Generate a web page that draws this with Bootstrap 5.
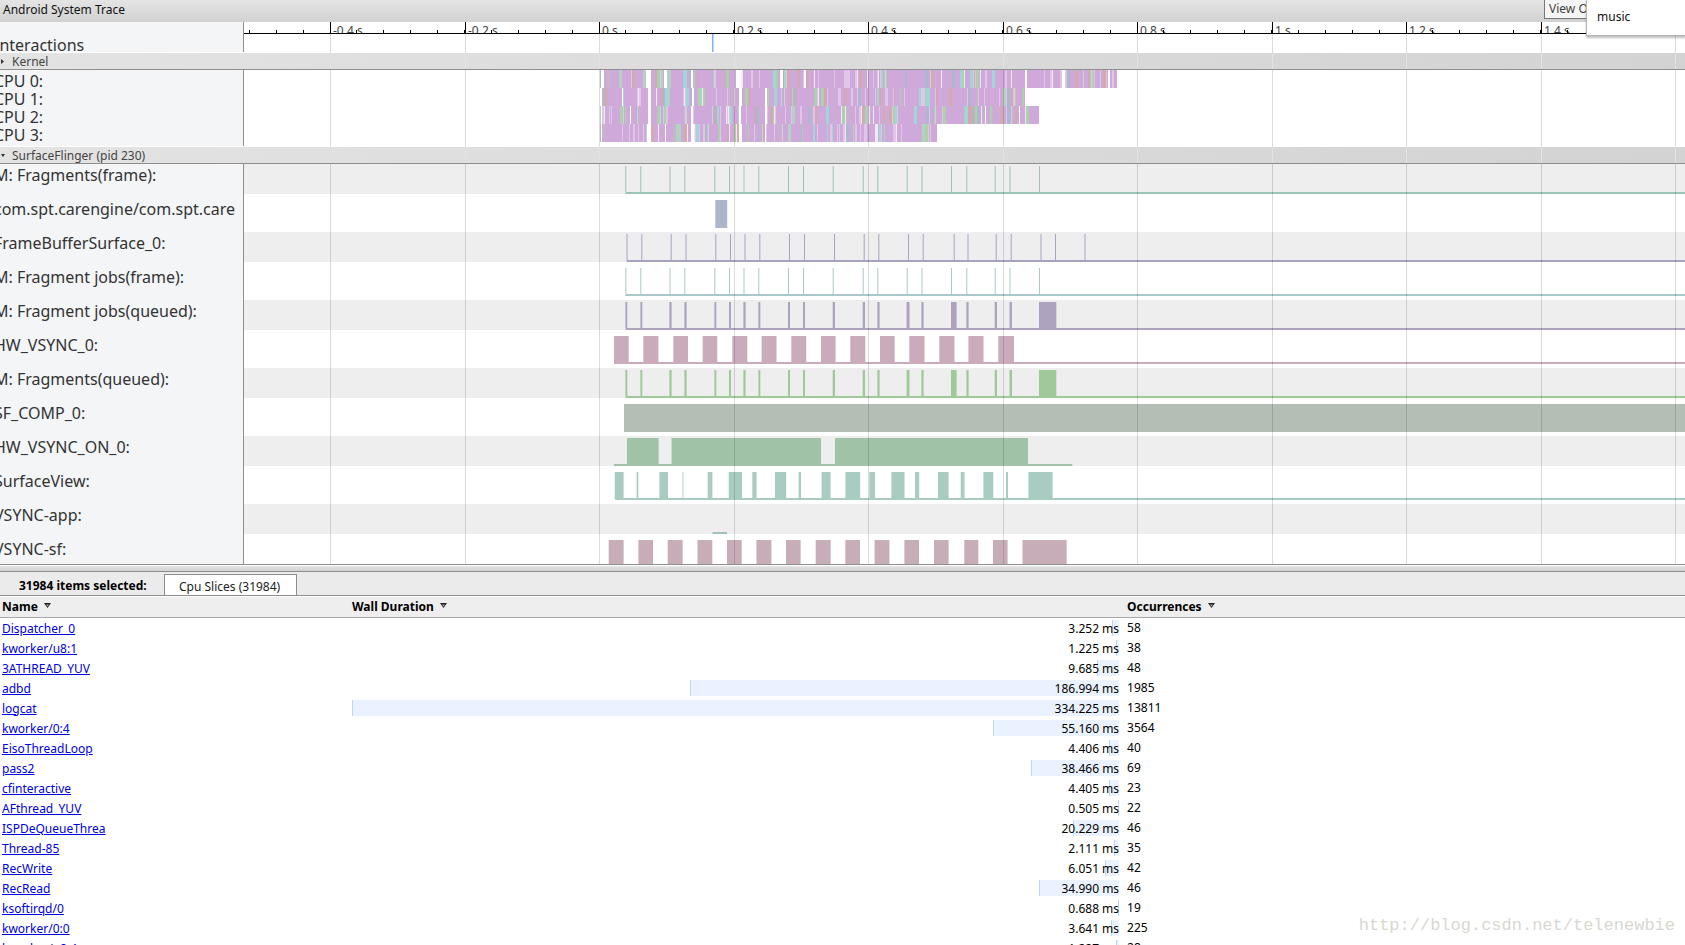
<!DOCTYPE html>
<html lang="en">
<head>
<meta charset="utf-8">
<meta name="viewport" content="width=device-width, initial-scale=1">
<title>Android System Trace</title>
<link href="https://cdn.jsdelivr.net/npm/bootstrap@5.3.0/dist/css/bootstrap.min.css" rel="stylesheet">
<style>
  body { font: 12px/16px "Noto Sans", "Open Sans", sans-serif; color: #000; background: #fff; height: 100vh; overflow: hidden; }
  .title-bar { height: 22px; line-height: 19px; background: linear-gradient(#e5e5e5, #d1d1d1); padding-left: 3px; color: #111; }
  .view-btn { font-size: 12px; line-height: 16px; height: 19px; width: 141px; border: 1px solid #777; border-top: 0; border-radius: 0; background: #f5f5f5; color: #444; padding: 1px 4px; text-align: left; }
  .suggest { top: 0; right: 0; width: 99px; height: 36px; background: #fff; border: 1px solid #b4b4b4; border-top: 0; border-right: 0; box-shadow: 0 2px 2px rgba(0,0,0,.25); padding: 9px 10px; z-index: 5; color: #111; }
  .trace-view { border-bottom: 1px solid #8e8e8e; }
  .trace-label { width: 244px; flex: none; background: #f3f5f7; border-right: 1px solid #8e8e8e; font-size: 16px; line-height: 22px; color: #333; white-space: nowrap; text-indent: -6px; }
  .trace-canvas { flex: 1 1 0; min-width: 0; overflow: hidden; }
  .trace-canvas svg, .group-head .grid-svg { display: block; width: 100%; height: 100%; }
  .ruler-row { height: 12px; }
  .slim-row { height: 18px; }
  .ruler-row text { font-size: 12px; fill: #444; }
  .counter-row .trace-label { height: 34px; line-height: 23px; }
  .counter-row .trace-canvas { height: 30px; }
  .counter-row:nth-child(odd) .trace-canvas { background: #eee; }
  .counter-row:last-child .trace-label, .counter-row:last-child .trace-canvas { height: 26px; }
  .group-head { height: 17px; margin-top: 1px; line-height: 16px; padding-top: 1px; color: #444; background: linear-gradient(90deg, #e3e3e3, #d3d3d3); border-bottom: 1px solid #8e8e8e; z-index: 2; }
  .group-head svg.caret { width: 4px; height: 5px; margin: 0 7px 0 1px; fill: #333; }
  .over-grid { top: 0; right: 0; bottom: 0; left: 244px; overflow: hidden; pointer-events: none; z-index: 1; }
  .kernel-tracks { margin-bottom: 5px; }
  .kernel-tracks .last-cpu .trace-label { height: 22px; }
  .drag-bar { height: 6px; margin-top: 1px; background: linear-gradient(#e5e5e5, #d1d1d1); border-bottom: 1px solid #8e8e8e; }
  .tab-strip { height: 24px; background: #ebebeb; border-bottom: 1px solid #8e8e8e; padding: 2px 0 0 19px; }
  .tab-strip .nav-link { font-size: 12px; line-height: 16px; padding: 4px 16px 1px 14px; height: 21px; border: 1px solid #8e8e8e; border-bottom: 0; border-radius: 0; background: #fff; color: #222; }
  .tab-title { width: 145px; line-height: 22px; padding-top: 1px; }
  .slices { width: 100%; table-layout: fixed; margin-top: 1px; border-collapse: collapse; }
  .slices th { height: 20px; line-height: 16px; background: #eee; border-bottom: 1px solid #aaa; padding: 2px 2px 1px; }
  .slices td { height: 20px; padding: 2px 6px 2px 2px; }
  .slices a { color: #0000e0; text-decoration: underline; display: block; line-height: 16px; padding-top: 1px; height: 16px; }
  .slices th svg { width: 7px; height: 5px; margin: 0 0 4px 3px; }
  .dur { height: 16px; line-height: 18px; text-align: right; z-index: 0; }
  .dur i { position: absolute; right: 0; top: 0; height: 16px; background: #eaf2ff; border-left: 1px solid #bdd7f8; z-index: -1; }
  .slices td:last-child { line-height: 18px; padding: 1px 2px; }
  .site-mark { right: 10px; bottom: 9px; font: 17px/20px "Liberation Mono", monospace; color: #d8d8d1; }
</style>
</head>
<body class="d-flex flex-column position-relative">
<header class="title-bar d-flex flex-shrink-0">
  <span>Android System Trace</span>
  <button class="btn view-btn ms-auto" type="button">View Options</button>
</header>
<div class="suggest position-absolute">music</div>

<main class="trace-view position-relative flex-shrink-0 overflow-hidden">
  <div class="d-flex ruler-row"><div class="trace-label"></div><div class="trace-canvas"><svg id="ruler"></svg></div></div>
  <div class="d-flex slim-row"><div class="trace-label">Interactions</div><div class="trace-canvas"><svg id="interactions"></svg></div></div>

  <div class="group-head position-relative d-flex align-items-center"><svg class="caret" viewBox="0 0 4 5"><path d="M0 0v5l3-2.5z"/></svg>Kernel<div class="over-grid position-absolute"><svg class="grid-svg" data-tone="#e2e2e2"></svg></div></div>
  <div class="kernel-tracks">
    <div class="d-flex slim-row"><div class="trace-label">CPU 0:</div><div class="trace-canvas"><svg class="cpu" data-end="1117"></svg></div></div>
    <div class="d-flex slim-row"><div class="trace-label">CPU 1:</div><div class="trace-canvas"><svg class="cpu" data-end="1025"></svg></div></div>
    <div class="d-flex slim-row"><div class="trace-label">CPU 2:</div><div class="trace-canvas"><svg class="cpu" data-end="1039"></svg></div></div>
    <div class="d-flex slim-row last-cpu"><div class="trace-label">CPU 3:</div><div class="trace-canvas"><svg class="cpu" data-end="937"></svg></div></div>
  </div>

  <div class="group-head position-relative d-flex align-items-center"><svg class="caret" viewBox="0 0 4 5"><path d="M0 1h4l-2 3z"/></svg>SurfaceFlinger (pid 230)<div class="over-grid position-absolute"><svg class="grid-svg" data-tone="#e2e2e2"></svg></div></div>
  <div>
    <div class="d-flex counter-row"><div class="trace-label">M: Fragments(frame):</div><div class="trace-canvas"><svg data-track="frame" data-fill="#9cc3b5"></svg></div></div>
    <div class="d-flex counter-row"><div class="trace-label">com.spt.carengine/com.spt.care</div><div class="trace-canvas"><svg data-track="car" data-fill="#abb6ca"></svg></div></div>
    <div class="d-flex counter-row"><div class="trace-label">FrameBufferSurface_0:</div><div class="trace-canvas"><svg data-track="fbs" data-fill="#a7a3c4"></svg></div></div>
    <div class="d-flex counter-row"><div class="trace-label">M: Fragment jobs(frame):</div><div class="trace-canvas"><svg data-track="frame" data-fill="#a9c8ca"></svg></div></div>
    <div class="d-flex counter-row"><div class="trace-label">M: Fragment jobs(queued):</div><div class="trace-canvas"><svg data-track="queued" data-fill="#aea3be"></svg></div></div>
    <div class="d-flex counter-row"><div class="trace-label">HW_VSYNC_0:</div><div class="trace-canvas"><svg data-track="hwv" data-fill="#c9abbb"></svg></div></div>
    <div class="d-flex counter-row"><div class="trace-label">M: Fragments(queued):</div><div class="trace-canvas"><svg data-track="queued" data-fill="#9fc999"></svg></div></div>
    <div class="d-flex counter-row"><div class="trace-label">SF_COMP_0:</div><div class="trace-canvas"><svg data-track="comp" data-fill="#b4beb5"></svg></div></div>
    <div class="d-flex counter-row"><div class="trace-label">HW_VSYNC_ON_0:</div><div class="trace-canvas"><svg data-track="hwon" data-fill="#a0c3a8"></svg></div></div>
    <div class="d-flex counter-row"><div class="trace-label">SurfaceView:</div><div class="trace-canvas"><svg data-track="view" data-fill="#a9ccc2"></svg></div></div>
    <div class="d-flex counter-row"><div class="trace-label">VSYNC-app:</div><div class="trace-canvas"><svg data-track="app" data-fill="#a3bfc0"></svg></div></div>
    <div class="d-flex counter-row"><div class="trace-label">VSYNC-sf:</div><div class="trace-canvas"><svg data-track="sf" data-fill="#c7adb7"></svg></div></div>
  </div>
  <div class="over-grid position-absolute"><svg class="w-100 h-100 d-block grid-svg" data-tone="rgba(0,0,0,.14)" data-top="12"></svg></div>
</main>

<div class="drag-bar flex-shrink-0"></div>
<section class="flex-grow-1 overflow-hidden">
  <div class="tab-strip d-flex">
    <b class="tab-title">31984 items selected:</b>
    <nav class="nav"><a class="nav-link" href="#slices">Cpu Slices (31984)</a></nav>
  </div>
  <table class="slices" id="slices">
    <colgroup><col style="width:350px"><col style="width:46%"><col></colgroup>
    <thead><tr>
      <th>Name <svg viewBox="0 0 7 5"><path d="M0 0h7L3.5 5z" fill="#222"/><path d="M2 1.500h3L3.500 3.500z" fill="#aaa"/></svg></th>
      <th>Wall Duration <svg viewBox="0 0 7 5"><path d="M0 0h7L3.5 5z" fill="#222"/><path d="M2 1.500h3L3.500 3.500z" fill="#aaa"/></svg></th>
      <th>Occurrences <svg viewBox="0 0 7 5"><path d="M0 0h7L3.5 5z" fill="#222"/><path d="M2 1.500h3L3.500 3.500z" fill="#aaa"/></svg></th>
    </tr></thead>
    <tbody>
      <tr><td><a href="#">Dispatcher_0</a></td><td><div class="dur position-relative">3.252 ms</div></td><td>58</td></tr>
      <tr><td><a href="#">kworker/u8:1</a></td><td><div class="dur position-relative">1.225 ms</div></td><td>38</td></tr>
      <tr><td><a href="#">3ATHREAD_YUV</a></td><td><div class="dur position-relative">9.685 ms</div></td><td>48</td></tr>
      <tr><td><a href="#">adbd</a></td><td><div class="dur position-relative">186.994 ms</div></td><td>1985</td></tr>
      <tr><td><a href="#">logcat</a></td><td><div class="dur position-relative">334.225 ms</div></td><td>13811</td></tr>
      <tr><td><a href="#">kworker/0:4</a></td><td><div class="dur position-relative">55.160 ms</div></td><td>3564</td></tr>
      <tr><td><a href="#">EisoThreadLoop</a></td><td><div class="dur position-relative">4.406 ms</div></td><td>40</td></tr>
      <tr><td><a href="#">pass2</a></td><td><div class="dur position-relative">38.466 ms</div></td><td>69</td></tr>
      <tr><td><a href="#">cfinteractive</a></td><td><div class="dur position-relative">4.405 ms</div></td><td>23</td></tr>
      <tr><td><a href="#">AFthread_YUV</a></td><td><div class="dur position-relative">0.505 ms</div></td><td>22</td></tr>
      <tr><td><a href="#">ISPDeQueueThrea</a></td><td><div class="dur position-relative">20.229 ms</div></td><td>46</td></tr>
      <tr><td><a href="#">Thread-85</a></td><td><div class="dur position-relative">2.111 ms</div></td><td>35</td></tr>
      <tr><td><a href="#">RecWrite</a></td><td><div class="dur position-relative">6.051 ms</div></td><td>42</td></tr>
      <tr><td><a href="#">RecRead</a></td><td><div class="dur position-relative">34.990 ms</div></td><td>46</td></tr>
      <tr><td><a href="#">ksoftirqd/0</a></td><td><div class="dur position-relative">0.688 ms</div></td><td>19</td></tr>
      <tr><td><a href="#">kworker/0:0</a></td><td><div class="dur position-relative">3.641 ms</div></td><td>225</td></tr>
      <tr><td><a href="#">kworker/u8:4</a></td><td><div class="dur position-relative">1.227 ms</div></td><td>28</td></tr>
    </tbody>
  </table>
</section>
<div class="site-mark position-absolute">http://blog.csdn.net/telenewbie</div>

<script src="https://cdn.jsdelivr.net/npm/bootstrap@5.3.0/dist/js/bootstrap.bundle.min.js"></script>
<script>
const NS = 'http://www.w3.org/2000/svg', LEFT = 244, ZERO = 599.6, STEP = 134.5;
function put(svg, tag, attrs, text) {
  const e = document.createElementNS(NS, tag);
  for (const k in attrs) e.setAttribute(k, attrs[k]);
  if (text) e.textContent = text;
  svg.appendChild(e);
}
const rect = (s, x, y, w, h, fill) => put(s, 'rect', {x: x - LEFT, y, width: w, height: h, fill});

// time ruler, only as many ticks as the canvas has room for
const ruler = document.getElementById('ruler');
const last = Math.floor((window.innerWidth - ZERO) / STEP);
for (let k = -2; k <= last; k++) {
  const x = Math.floor(ZERO + k * STEP);
  if (x + 30 < window.innerWidth) put(ruler, 'text', {x: x - LEFT + 3, y: 13}, (k * 2 / 10) + ' s');
  rect(ruler, x, 0, 1, 12, '#000');
}
for (let k = -13; k <= last * 5 + 5; k++) rect(ruler, Math.floor(599 + k * STEP / 5), 8, 1, 3, '#000');
put(ruler, 'rect', {x: 0, y: 11, width: '100%', height: 1, fill: '#000'});

document.querySelectorAll('.grid-svg').forEach(s => {
  for (let k = -2; k <= last; k++)
    rect(s, Math.floor(ZERO + k * STEP), s.dataset.top || 0, 1, '100%', s.dataset.tone);
});
const inter = document.getElementById('interactions');
rect(inter, 712, 0, 1, 18, '#82aeff');
rect(inter, 713, 0, 1, 18, '#bdd6ff');

// scheduler slices
let seed = 7;
const rnd = () => (seed = (seed * 16807) % 2147483647) / 2147483647;
const MAIN = '#cfa9d9';
const OTHER = ['#add1ad', '#add1ad', '#b2d3c2', '#abb8cf', '#d1a8b8', '#9fd6d8', '#c4b6c8', '#d3abab'];
const GAPS = [
  [[601,604],[646,651],[664,667],[691,693],[736,741],[780,783],[804,806],[1025,1027],[1062,1065],[1108,1110]],
  [[600,602],[622,623],[648,651],[692,694],[739,742],[765,767]],
  [[601,602],[630,631],[648,651],[691,693],[739,741],[765,767],[985,986],[1019,1020]],
  [[601,602],[647,651],[665,666],[691,694],[739,742],[765,766]]
];
document.querySelectorAll('.cpu').forEach((s, i) => {
  const end = +s.dataset.end;
  rect(s, 600, 0, end - 600, 18, MAIN);
  for (let x = 600; x < end;) {
    const r = rnd(), busy = x > 1020 ? .1 : 0;
    let w = 1, c = null;
    if (r < .20) c = '#dfc6e6';
    else if (r < .24 + busy) c = '#f2e8f5';
    else if (r < .54 + busy) { c = OTHER[Math.floor(rnd() * OTHER.length)]; w = 1 + Math.floor(rnd() * 3); }
    else w = 1 + Math.floor(rnd() * 5);
    if (c) rect(s, x, 0, Math.min(w, end - x), 18, c);
    x += w;
  }
  GAPS[i].forEach(g => rect(s, g[0], 0, g[1] - g[0], 18, '#fff'));
});
rect(document.querySelector('.cpu'), 600, 0, 1, 18, '#abb8d4');

// counter samples, in tenths of a timeline unit: [start, end]
const single = a => a.map(x => [x, x + 10]);
const T = {
  frame: {base: [6255], bars: single([6253,6403,6695,6843,7143,7290,7435,7583,7880,8030,8327,8627,8773,9067,9215,9510,9663,9947,10095,10390])},
  fbs: {base: [6267], bars: single([6265,6413,6707,6855,7153,7300,7445,7593,7890,8040,8340,8637,8783,9080,9227,9537,9675,9957,10107,10405,10550,10845])},
  car: {bars: [[7153,7272]]},
  queued: {base: [6255], bars: [[6254,6273],[6404,6423],[6694,6716],[6844,6866],[7144,7163],[7290,7310],[7434,7456],[7584,7603],[7880,7900],[8030,8050],[8327,8350],[8627,8650],[8774,8796],[9066,9095],[9214,9236],[9510,9566],[9664,9686],[9947,9970],[10095,10120],[10390,10563]]},
  hwv: {base: [6140], bars: [[6140,6287],[6433,6584],[6733,6880],[7027,7173],[7323,7473],[7616,7765],[7913,8063],[8210,8356],[8503,8653],[8800,8947],[9093,9245],[9393,9545],[9684,9835],[9983,10140]]},
  comp: {bars: [[6240,60000]]},
  hwon: {base: [6140,10723], bars: [[6270,6586],[6715,8210],[8350,10280]]},
  view: {base: [6150], bars: [[6147,6236],[6366,6383],[6594,6680],[6825,6834],[7077,7124],[7287,7420],[7523,7566],[7750,7862],[7986,8010],[8216,8306],[8454,8602],[8693,8750],[8914,9045],[9150,9192],[9380,9486],[9607,9645],[9834,9933],[10060,10080],[10284,10526]]},
  app: {base: [7125,7270], bars: []},
  sf: {bars: [[6087,6236],[6384,6530],[6677,6826],[6975,7123],[7270,7417],[7564,7714],[7860,8006],[8157,8306],[8454,8600],[8746,8894],[9044,9190],[9340,9486],[9643,9783],[9930,10076],[10225,10666]]}
};
document.querySelectorAll('[data-track]').forEach(s => {
  const t = T[s.dataset.track], f = s.dataset.fill;
  t.bars.forEach(b => rect(s, b[0] / 10, 2, (b[1] - b[0]) / 10, t.base ? 26 : 28, f));
  if (t.base) rect(s, t.base[0] / 10, 28, ((t.base[1] || 60000) - t.base[0]) / 10, 2, f);
});

// duration bars relative to the longest one
const durs = [...document.querySelectorAll('.dur')];
const longest = Math.max(...durs.map(d => parseFloat(d.textContent)));
durs.forEach(d => {
  const bar = document.createElement('i');
  bar.style.width = parseFloat(d.textContent) / longest * 100 + '%';
  d.appendChild(bar);
});
</script>
</body>
</html>
